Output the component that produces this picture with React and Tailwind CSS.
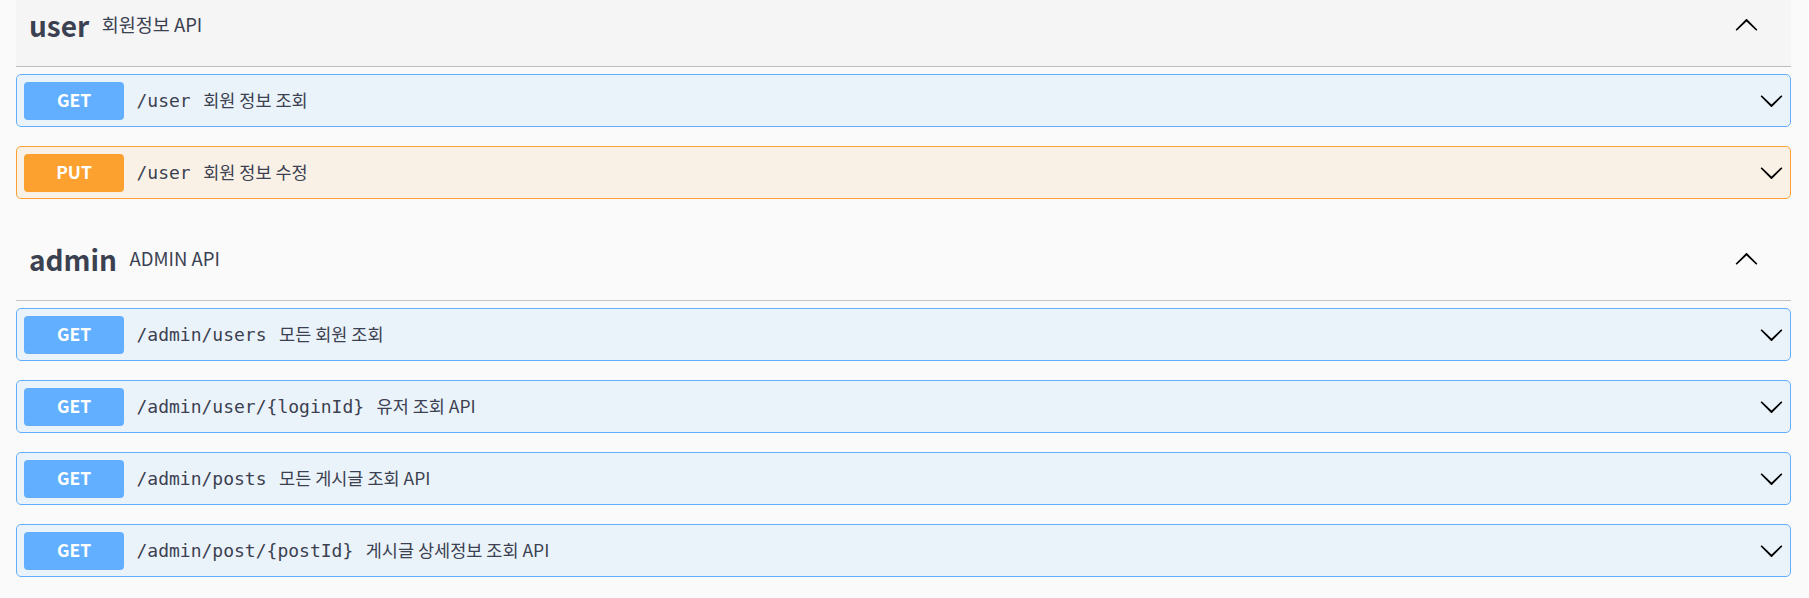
import React from "react";

const sans = "font-['Noto_Sans_CJK_KR','Noto_Sans',sans-serif]";
const mono = "font-['DejaVu_Sans_Mono','Liberation_Mono',monospace]";

const sections = [
  {
    name: "user",
    description: "회원정보 API",
    hovered: true,
    ops: [
      { method: "GET", path: "/user", summary: "회원 정보 조회" },
      { method: "PUT", path: "/user", summary: "회원 정보 수정" },
    ],
  },
  {
    name: "admin",
    description: "ADMIN API",
    ops: [
      { method: "GET", path: "/admin/users", summary: "모든 회원 조회" },
      { method: "GET", path: "/admin/user/{loginId}", summary: "유저 조회 API" },
      { method: "GET", path: "/admin/posts", summary: "모든 게시글 조회 API" },
      { method: "GET", path: "/admin/post/{postId}", summary: "게시글 상세정보 조회 API" },
    ],
  },
];

const methodStyles = {
  GET: {
    row: "border-[#61affe] bg-[#ebf3fa]",
    badge: "bg-[#61affe]",
  },
  PUT: {
    row: "border-[#fca130] bg-[#faf1e6]",
    badge: "bg-[#fca130]",
  },
};

function Arrow({ up }) {
  return (
    <svg
      viewBox="0 0 20 20"
      className={up ? "h-[25px] w-[25px] rotate-180" : "h-[25px] w-[25px]"}
      fill="#000"
    >
      <path d="M17.418 6.109c.272-.268.709-.268.979 0s.271.701 0 .969l-7.908 7.83c-.27.268-.707.268-.979 0l-7.908-7.83c-.27-.268-.27-.701 0-.969.271-.268.709-.268.979 0L10 13.25l7.418-7.141z" />
    </svg>
  );
}

function Operation({ op }) {
  const style = methodStyles[op.method];
  return (
    <div
      className={`mb-[19px] flex h-[53px] items-center rounded-[5px] border pl-[7px] pr-[6px] text-[#3b4151] ${style.row}`}
    >
      <span
        className={`flex h-[38px] w-[100px] shrink-0 items-center justify-center rounded-[4px] text-[17.5px] font-bold text-white ${sans} ${style.badge}`}
      >
        {op.method}
      </span>
      <span className={`px-[12.5px] text-[18px] ${mono}`}>{op.path}</span>
      <span className={`text-[17.5px] ${sans}`}>{op.summary}</span>
      <span className="ml-auto flex items-center">
        <Arrow />
      </span>
    </div>
  );
}

function TagSection({ section, first }) {
  return (
    <div className={first ? "-mt-[16px] flex flex-col" : "flex flex-col"}>
      <div
        className={`mb-[7px] flex h-[83px] items-center border-b border-[#3b4151]/30 pl-[13px] pr-[32px] text-[#3b4151] ${
          section.hovered ? "bg-[#f5f5f5]" : ""
        }`}
      >
        <span className={`text-[28px] font-bold ${sans}`}>{section.name}</span>
        <span className={`px-[12.5px] text-[18.5px] ${sans}`}>{section.description}</span>
        <span className="ml-auto flex items-center">
          <Arrow up />
        </span>
      </div>
      {section.ops.map((op, i) => (
        <Operation key={i} op={op} />
      ))}
    </div>
  );
}

export default function App() {
  return (
    <div className="flex min-h-screen flex-col overflow-hidden bg-[#fafafa] pl-[16px] pr-[18px]">
      {sections.map((s, i) => (
        <TagSection key={s.name} section={s} first={i === 0} />
      ))}
    </div>
  );
}
